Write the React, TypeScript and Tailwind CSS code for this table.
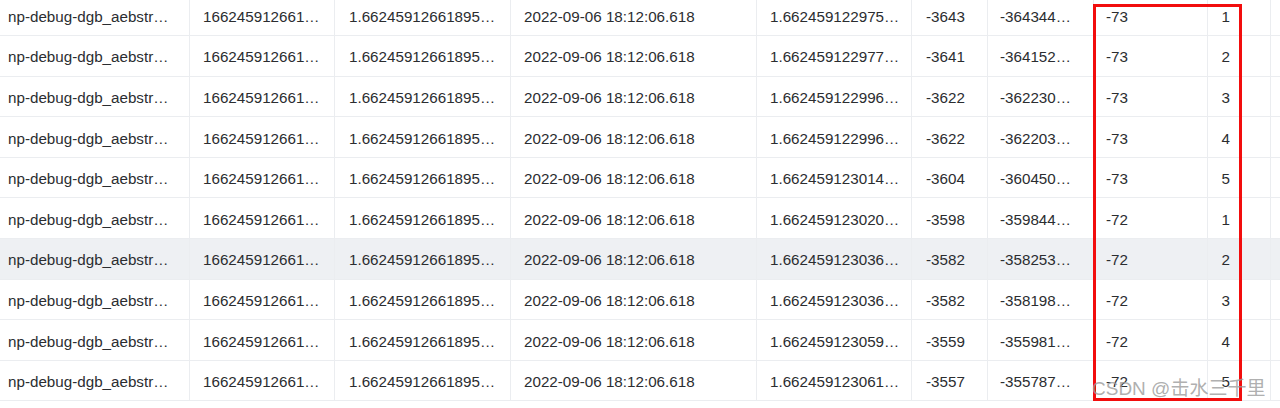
const rows = [
  ["1.662459122975…", "-3643", "-364344…", "-73", "1"],
  ["1.662459122977…", "-3641", "-364152…", "-73", "2"],
  ["1.662459122996…", "-3622", "-362230…", "-73", "3"],
  ["1.662459122996…", "-3622", "-362203…", "-73", "4"],
  ["1.662459123014…", "-3604", "-360450…", "-73", "5"],
  ["1.662459123020…", "-3598", "-359844…", "-72", "1"],
  ["1.662459123036…", "-3582", "-358253…", "-72", "2"],
  ["1.662459123036…", "-3582", "-358198…", "-72", "3"],
  ["1.662459123059…", "-3559", "-355981…", "-72", "4"],
  ["1.662459123061…", "-3557", "-355787…", "-72", "5"],
];

const cell = "flex items-center pt-[4px] border-r border-[#ebedf0] whitespace-nowrap overflow-hidden";

export default function App() {
  return (
    <div className="relative w-[1280px] h-[408px] overflow-hidden bg-white font-['Liberation_Sans',Arial,sans-serif] text-[15.2px] text-[#2b2d30]">
      <div className="-mt-[4.5px]">
        {rows.map((r, i) => (
          <div
            key={i}
            className={`grid grid-cols-[190px_145px_176px_246px_155px_76px_106px_114px_63px_1fr] h-[40.6px] border-b border-[#ebedf0] ${
              i === 6 ? "bg-[#eef0f3]" : "bg-white"
            }`}
          >
            <div className={`${cell} pl-2`}>np-debug-dgb_aebstr…</div>
            <div className={`${cell} pl-[13px]`}>166245912661…</div>
            <div className={`${cell} pl-[14px]`}>1.66245912661895…</div>
            <div className={`${cell} pl-[13px]`}>2022-09-06 18:12:06.618</div>
            <div className={`${cell} pl-[13px]`}>{r[0]}</div>
            <div className={`${cell} pl-[14px]`}>{r[1]}</div>
            <div className={`${cell} pl-[12px]`}>{r[2]}</div>
            <div className={`${cell} pl-[12px]`}>{r[3]}</div>
            <div className={`${cell} justify-end pr-[40px]`}>{r[4]}</div>
            <div className="" />
          </div>
        ))}
      </div>

      {/* red highlight box */}
      <div className="absolute left-[1093px] top-[4px] w-[149px] h-[397px] border-[3px] border-[#f20d0d] pointer-events-none" />

      {/* watermark */}
      <div className="absolute left-[1092px] top-[379px] text-[19px] leading-none text-[#9a9a9a]/80 font-['Liberation_Sans','Noto_Sans_CJK_SC',sans-serif] whitespace-nowrap">
        CSDN @击水三千里
      </div>
    </div>
  );
}
